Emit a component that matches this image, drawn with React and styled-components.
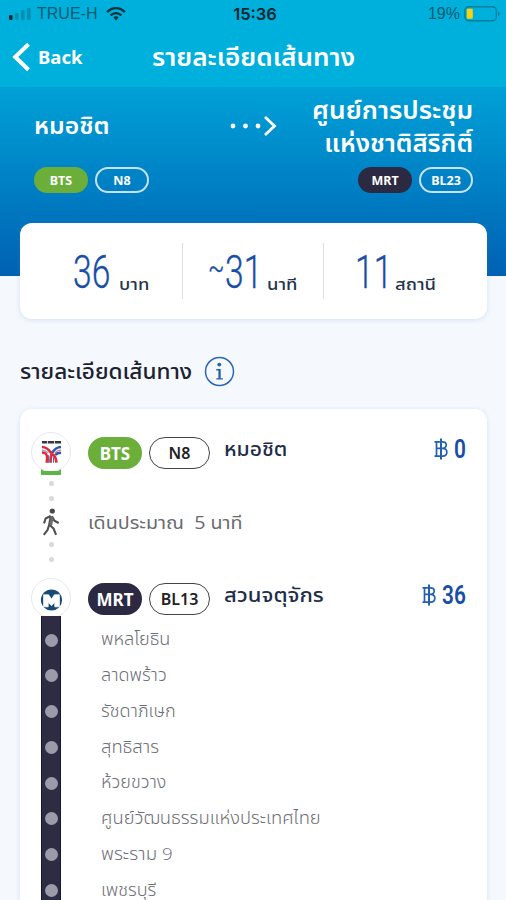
import React from "react";
import styled, { createGlobalStyle } from "styled-components";

const GlobalStyle = createGlobalStyle`
  * { box-sizing: border-box; }
  body {
    margin: 0;
    background: #f5f9fe;
    font-family: "Open Sans", "Noto Sans Thai", "Noto Sans", sans-serif;
  }
`;

const Screen = styled.div`
  width: 506px;
  height: 900px;
  overflow: hidden;
  background: #f5f9fe;
`;

const Text = styled.span`
  display: block;
  flex: none;
  white-space: nowrap;
  font-size: ${(p) => p.$size}px;
  font-weight: ${(p) => p.$weight || 400};
  line-height: ${(p) => p.$line || 30}px;
  color: ${(p) => p.$color || "#fff"};
  transform: scaleX(${(p) => p.$stretch || 1});
  transform-origin: ${(p) => p.$origin || "left"} center;
`;

const TopBar = styled.header`
  height: 87px;
  background: #00b0dc;
`;

const StatusBar = styled.div`
  height: 28px;
  padding: 0 5px 0 9px;
  display: grid;
  grid-template-columns: 1fr auto 1fr;
  align-items: center;
  font-family: "Liberation Sans", sans-serif;
  font-size: 16px;
  color: #075a70;
`;

const StatusGroup = styled.div`
  display: flex;
  align-items: center;
  justify-content: ${(p) => (p.$end ? "flex-end" : "flex-start")};
  gap: ${(p) => (p.$end ? 4 : 5)}px;
`;

const Carrier = styled.span`
  margin-right: 4px;
`;

const Clock = styled.div`
  font-family: Inter, sans-serif;
  font-weight: 600;
  font-size: 16.5px;
  color: #06262f;
`;

const NavBar = styled.nav`
  height: 59px;
  padding-left: 12px;
  display: grid;
  grid-template-columns: 140px 1fr;
  align-items: center;
`;

const BackButton = styled.button`
  display: flex;
  align-items: center;
  gap: 8px;
  padding: 0 0 2px;
  border: 0;
  background: none;
  font: 700 18.5px "Noto Sans", sans-serif;
  color: #fff;
`;

const NavTitle = styled.div`
  padding-bottom: 1px;
`;

const Hero = styled.section`
  height: 189px;
  padding: 5px 33px 0 34px;
  background: linear-gradient(#00a1d7, #0061b3);
`;

const Endpoints = styled.div`
  height: 68px;
  display: grid;
  grid-template-columns: 195px 48px 1fr;
  align-items: center;
`;

const Origin = styled.div`
  padding-bottom: 2px;
`;

const Destination = styled.div`
  display: flex;
  flex-direction: column;
  align-items: flex-end;
`;

const HeroCodes = styled.div`
  margin-top: 7px;
  display: flex;
  justify-content: space-between;
`;

const PillGroup = styled.div`
  display: flex;
  gap: 7px;
`;

const pillFill = { bts: "#6cae3a", mrt: "#2b2a42" };

const Pill = styled.span`
  display: flex;
  align-items: center;
  justify-content: center;
  width: 54px;
  height: ${(p) => (p.$large ? 32 : 26)}px;
  border-radius: 16px;
  font: 700 ${(p) => (p.$large ? 17 : 12.5)}px "Noto Sans", sans-serif;
  color: #fff;
  background: ${(p) => pillFill[p.$line]};
`;

const CodePill = styled(Pill)`
  width: ${(p) => (p.$large ? 61 : 54)}px;
  background: transparent;
  border: ${(p) => (p.$large ? "1.5px solid #444" : "2px solid #c5e2f6")};
  color: ${(p) => (p.$large ? "#222" : "#fff")};
  font-weight: ${(p) => (p.$large ? 600 : 700)};
  font-size: ${(p) => (p.$large ? 16 : 12.5)}px;
`;

const Card = styled.section`
  margin: 0 19px 0 20px;
  background: #fff;
  border-radius: 12px;
  box-shadow: 0 1px 5px rgba(90, 130, 200, 0.22);
`;

const Summary = styled(Card)`
  position: relative;
  height: 96px;
  margin-top: -53px;
  padding-top: 20px;
  display: grid;
  grid-template-columns: 163px 141px 1fr;
`;

const Metric = styled.div`
  height: 56px;
  display: flex;
  padding-left: ${(p) => p.$inset}px;
  border-right: ${(p) => (p.$last ? "0" : "1px solid #dcdfe5")};
`;

const Figure = styled.div`
  width: ${(p) => p.$width}px;
  display: flex;
  font: 300 46px/58px Roboto, sans-serif;
  white-space: nowrap;
  color: #174ea6;
  -webkit-text-stroke: 0.35px #174ea6;
`;

const Digits = styled.span`
  transform: scaleX(0.73);
  transform-origin: left center;
`;

const Tilde = styled.span`
  width: 17px;
  font-size: 32px;
  line-height: 50px;
  transform: scaleX(0.75);
  transform-origin: left center;
`;

const Unit = styled.div`
  padding-top: 26px;
`;

const SectionHeading = styled.div`
  height: 90px;
  padding: 14px 0 0 20px;
  display: flex;
  align-items: center;
`;

const HeadingText = styled.div`
  width: 184px;
`;

const RouteCard = styled(Card)`
  height: 520px;
  padding-top: 23px;
`;

const Leg = styled.div`
  height: ${(p) => p.$height}px;
  display: grid;
  grid-template-columns: 68px 1fr;
`;

const Rail = styled.div`
  display: flex;
  flex-direction: column;
  align-items: center;
  padding-right: 6px;
`;

const Badge = styled.div`
  flex: none;
  width: 40px;
  height: 40px;
  padding-top: ${(p) => p.$drop || 0}px;
  border: 1px solid #e6e8ec;
  border-radius: 50%;
  display: flex;
  align-items: center;
  justify-content: center;
`;

const Stub = styled.div`
  flex: none;
  width: 20px;
  height: 6px;
  margin-top: -3px;
  background: #5db544;
  clip-path: polygon(0 0, 15% 35%, 85% 35%, 100% 0, 100% 100%, 0 100%);
`;

const Dot = styled.i`
  flex: none;
  width: 5px;
  height: 5px;
  margin-top: ${(p) => p.$gap}px;
  border-radius: 50%;
  background: #d9d9dc;
`;

const LineBar = styled.div`
  flex: none;
  width: 20px;
  height: 300px;
  margin-top: -2px;
  padding-top: 17.5px;
  display: flex;
  flex-direction: column;
  align-items: center;
  gap: 22.75px;
  background: #2d2c42;
  border: solid #17153d;
  border-width: 0 1.5px;
`;

const StopDot = styled.i`
  flex: none;
  width: 13px;
  height: 13px;
  border-radius: 50%;
  background: #9b9ba9;
`;

const StationRow = styled.div`
  height: 42px;
  padding-right: 21px;
  display: flex;
  align-items: center;
`;

const StationName = styled.div`
  flex: 1;
  margin: -8px 0 0 14px;
`;

const Fare = styled.div`
  display: flex;
  align-items: center;
  gap: 6px;
  height: 30px;
  margin-top: -9px;
`;

const FareNumber = styled.div`
  width: ${(p) => p.$width}px;
  font: 600 26px/30px Roboto, sans-serif;
  color: #174ea6;

  span {
    display: inline-block;
    transform: scaleX(0.8);
    transform-origin: left center;
  }
`;

const WalkRow = styled.div`
  display: flex;
  padding-top: 33px;
`;

const Stops = styled.div`
  padding: 1.5px 0 0 13px;
`;

const Stop = styled.div`
  height: 35.75px;
  display: flex;
  align-items: center;
`;

const WalkGlyph = styled.svg`
  flex: none;
  margin-top: 7px;
`;

const SignalIcon = () => (
  <svg width="23" height="14" viewBox="0 0 23 14">
    <rect x="0" y="8" width="3.6" height="5" rx="1" fill="#052b36" />
    <rect x="6" y="6" width="3.6" height="7" rx="1" fill="#098fb1" />
    <rect x="12" y="3" width="3.6" height="10" rx="1" fill="#098fb1" />
    <rect x="18" y="1" width="3.6" height="12" rx="1" fill="#098fb1" />
  </svg>
);

const WifiIcon = () => (
  <svg width="20" height="14" viewBox="0 0 20 14" fill="none" stroke="#06303c" strokeWidth="2.3">
    <path d="M1.2 5.1C6-.1 14-.1 18.8 5.1" />
    <path d="M4.6 8.4c3-3.1 7.8-3.1 10.8 0" />
    <path d="M7.3 10.2c1.6-1.3 3.8-1.3 5.4 0L10 13.4z" fill="#06303c" stroke="none" />
  </svg>
);

const BatteryIcon = () => (
  <svg width="37" height="16" viewBox="0 0 37 16">
    <rect x="0.8" y="0.8" width="31.5" height="14" rx="4" fill="none" stroke="#087e9b" strokeWidth="1.4" />
    <rect x="2.8" y="2.8" width="6" height="10" rx="1" fill="#fbd20b" />
    <path d="M34 5.5c2.2.4 2.2 4.2 0 4.6z" fill="#087e9b" />
  </svg>
);

const BackIcon = () => (
  <svg width="18" height="30" viewBox="0 0 18 30" fill="none" stroke="#fff" strokeWidth="4">
    <path d="M16.5 2.2 3.2 15l13.3 12.8" />
  </svg>
);

const ArrowIcon = () => (
  <svg width="48" height="22" viewBox="0 0 48 22">
    <g fill="#fff">
      <circle cx="4" cy="11" r="2.4" />
      <circle cx="16.5" cy="11" r="2.4" />
      <circle cx="29" cy="11" r="2.4" />
    </g>
    <path d="m36 2 9.5 9L36 20" fill="none" stroke="#fff" strokeWidth="2.8" />
  </svg>
);

const InfoIcon = () => (
  <svg width="31" height="31" viewBox="0 0 31 31">
    <circle cx="15.5" cy="15.5" r="14" fill="none" stroke="#2a66b5" strokeWidth="1.5" />
    <circle cx="15.3" cy="8.6" r="1.9" fill="#2360b0" />
    <path d="M12.3 13h4.4v9.2h2.2v1.4h-6.6v-1.4h2.1v-7.8h-2.1z" fill="#2360b0" />
  </svg>
);

const BtsLogo = () => (
  <svg width="21" height="24" viewBox="0 0 22 24" fill="none">
    <path d="M1 1.8h20" stroke="#34383e" strokeWidth="2.6" strokeDasharray="5.5 .8 6.5 .8 6.4" />
    <path d="M1 6.8c5 0 7.2 2.6 9.6 6.2" stroke="#e12835" strokeWidth="2.8" />
    <path d="M21 6.8c-5 0-7.2 2.6-9.6 6.2" stroke="#245db0" strokeWidth="2.8" />
    <path d="M1 10c3 .1 5 1.2 6.6 3.2" stroke="#7fa6dc" strokeWidth="1.4" />
    <path d="M21 10c-3 .1-5 1.2-6.6 3.2" stroke="#e77882" strokeWidth="1.4" />
    <path d="M1 12.6c3.6 0 6.8 1.6 4.8 10.6" stroke="#e12835" strokeWidth="2.6" />
    <path d="M21 12.8c-2.6 0-4.4.6-6 2.2" stroke="#245db0" strokeWidth="2.4" />
    <path d="M11 11.8v3.4c-.8 1.6-1 4-1 8M12.2 14.5c3 1.5 3.6 5 4 8.7" stroke="#e12835" strokeWidth="2.8" />
    <path d="M8 15.5v7.7M13 17.5v5.7" stroke="#2d68ba" strokeWidth="1.1" />
  </svg>
);

const MrtLogo = () => (
  <svg width="23" height="22" viewBox="0 0 23 22">
    <circle cx="11.5" cy="11" r="10.6" fill="#164b73" />
    <path d="M3.6 17.8V5.8h5l2.9 4.4 2.9-4.4h5v12h-4.6v-4.6l-3.3 3.5-3.3-3.5v4.6z" fill="#fff" stroke="#fff" strokeWidth=".8" />
  </svg>
);

const WalkIcon = () => (
  <WalkGlyph width="18" height="28" viewBox="0 0 18 28" fill="none" stroke="#505050" strokeWidth="2.1" strokeLinejoin="round">
    <circle cx="10.3" cy="3" r="2.6" fill="#484848" stroke="none" />
    <path d="M8.7 8 7.2 16.5l4.3 4 2.6 6.4M7.2 16.8l-1.6 5L1.8 26.8" />
    <path d="M8.7 8 3.6 10.5 2 15.4M10 8.2l2.4 4.5 4.3 2.3" />
    <path d="m8.7 8-1.5 8.6 2.9.8 1.5-7.6z" fill="#6a6a6a" stroke="none" />
  </WalkGlyph>
);

const BahtIcon = () => (
  <svg width="14" height="22" viewBox="0 0 14 22" fill="none" stroke="#2560ae">
    <path d="M2.5 3.5v15M.5 3.8h8c5 0 5 6.6 0 6.6h-6M8.5 10.4c5.8 0 5.8 7.8 0 7.8h-8" strokeWidth="1.7" />
    <path d="M7 .5v21" strokeWidth="2" />
  </svg>
);

const metrics = [
  { value: "36", unit: "บาท", inset: 53, width: 46 },
  { value: "31", approx: true, unit: "นาที", inset: 25, width: 59 },
  { value: "11", unit: "สถานี", inset: 31, width: 40 },
];

const stops = [
  { name: "พหลโยธิน", stretch: 1.065 },
  { name: "ลาดพร้าว", stretch: 1.06 },
  { name: "รัชดาภิเษก", stretch: 1.065 },
  { name: "สุทธิสาร", stretch: 1.08 },
  { name: "ห้วยขวาง", stretch: 1.06 },
  { name: "ศูนย์วัฒนธรรมแห่งประเทศไทย", stretch: 1.08 },
  { name: "พระราม 9", stretch: 1.1 },
  { name: "เพชรบุรี", stretch: 1.065 },
];

const Station = ({ line, lineName, code, name, stretch, fare, fareWidth }) => (
  <StationRow>
    <PillGroup>
      <Pill $large $line={line}>{lineName}</Pill>
      <CodePill $large>{code}</CodePill>
    </PillGroup>
    <StationName>
      <Text $size={19.5} $weight={500} $color="#1e2d4b" $stretch={stretch}>{name}</Text>
    </StationName>
    <Fare>
      <BahtIcon />
      <FareNumber $width={fareWidth}><span>{fare}</span></FareNumber>
    </Fare>
  </StationRow>
);

export default function App() {
  return (
    <Screen>
      <GlobalStyle />
      <TopBar>
        <StatusBar>
          <StatusGroup><SignalIcon /><Carrier>TRUE-H</Carrier><WifiIcon /></StatusGroup>
          <Clock>15:36</Clock>
          <StatusGroup $end>19%<BatteryIcon /></StatusGroup>
        </StatusBar>
        <NavBar>
          <BackButton><BackIcon />Back</BackButton>
          <NavTitle><Text $size={24} $weight={600} $stretch={1.088}>รายละเอียดเส้นทาง</Text></NavTitle>
        </NavBar>
      </TopBar>
      <Hero>
        <Endpoints>
          <Origin><Text $size={23.5} $weight={600} $stretch={1.05}>หมอชิต</Text></Origin>
          <ArrowIcon />
          <Destination>
            <Text $size={24} $weight={600} $line={33} $origin="right" $stretch={1.095}>ศูนย์การประชุม</Text>
            <Text $size={24} $weight={600} $line={33} $origin="right" $stretch={1.07}>แห่งชาติสิริกิติ์</Text>
          </Destination>
        </Endpoints>
        <HeroCodes>
          <PillGroup><Pill $line="bts">BTS</Pill><CodePill>N8</CodePill></PillGroup>
          <PillGroup><Pill $line="mrt">MRT</Pill><CodePill>BL23</CodePill></PillGroup>
        </HeroCodes>
      </Hero>
      <Summary>
        {metrics.map((m, i) => (
          <Metric key={m.value} $inset={m.inset} $last={i === 2}>
            <Figure $width={m.width}>
              {m.approx && <Tilde>~</Tilde>}
              <Digits>{m.value}</Digits>
            </Figure>
            <Unit><Text $size={16} $color="#26334d" $weight={500} $stretch={1.15}>{m.unit}</Text></Unit>
          </Metric>
        ))}
      </Summary>
      <SectionHeading>
        <HeadingText><Text $size={21} $weight={500} $color="#1c2230" $stretch={1.075}>รายละเอียดเส้นทาง</Text></HeadingText>
        <InfoIcon />
      </SectionHeading>
      <RouteCard>
        <Leg $height={146}>
          <Rail>
            <Badge><BtsLogo /></Badge>
            <Stub />
            <Dot $gap={6} /><Dot $gap={10} />
            <WalkIcon />
            <Dot $gap={6} /><Dot $gap={10} />
          </Rail>
          <div>
            <Station line="bts" lineName="BTS" code="N8" name="หมอชิต" stretch={1.08} fare="0" fareWidth={12} />
            <WalkRow><Text $size={17.5} $color="#696b70" $stretch={1.125}>เดินประมาณ&nbsp; 5 นาที</Text></WalkRow>
          </div>
        </Leg>
        <Leg $height={340}>
          <Rail>
            <Badge $drop={4}><MrtLogo /></Badge>
            <LineBar>{stops.map((s) => <StopDot key={s.name} />)}</LineBar>
          </Rail>
          <div>
            <Station line="mrt" lineName="MRT" code="BL13" name="สวนจตุจักร" stretch={1.13} fare="36" fareWidth={24} />
            <Stops>
              {stops.map((s) => (
                <Stop key={s.name}><Text $size={17} $weight={300} $color="#6c6e76" $stretch={s.stretch}>{s.name}</Text></Stop>
              ))}
            </Stops>
          </div>
        </Leg>
      </RouteCard>
    </Screen>
  );
}
